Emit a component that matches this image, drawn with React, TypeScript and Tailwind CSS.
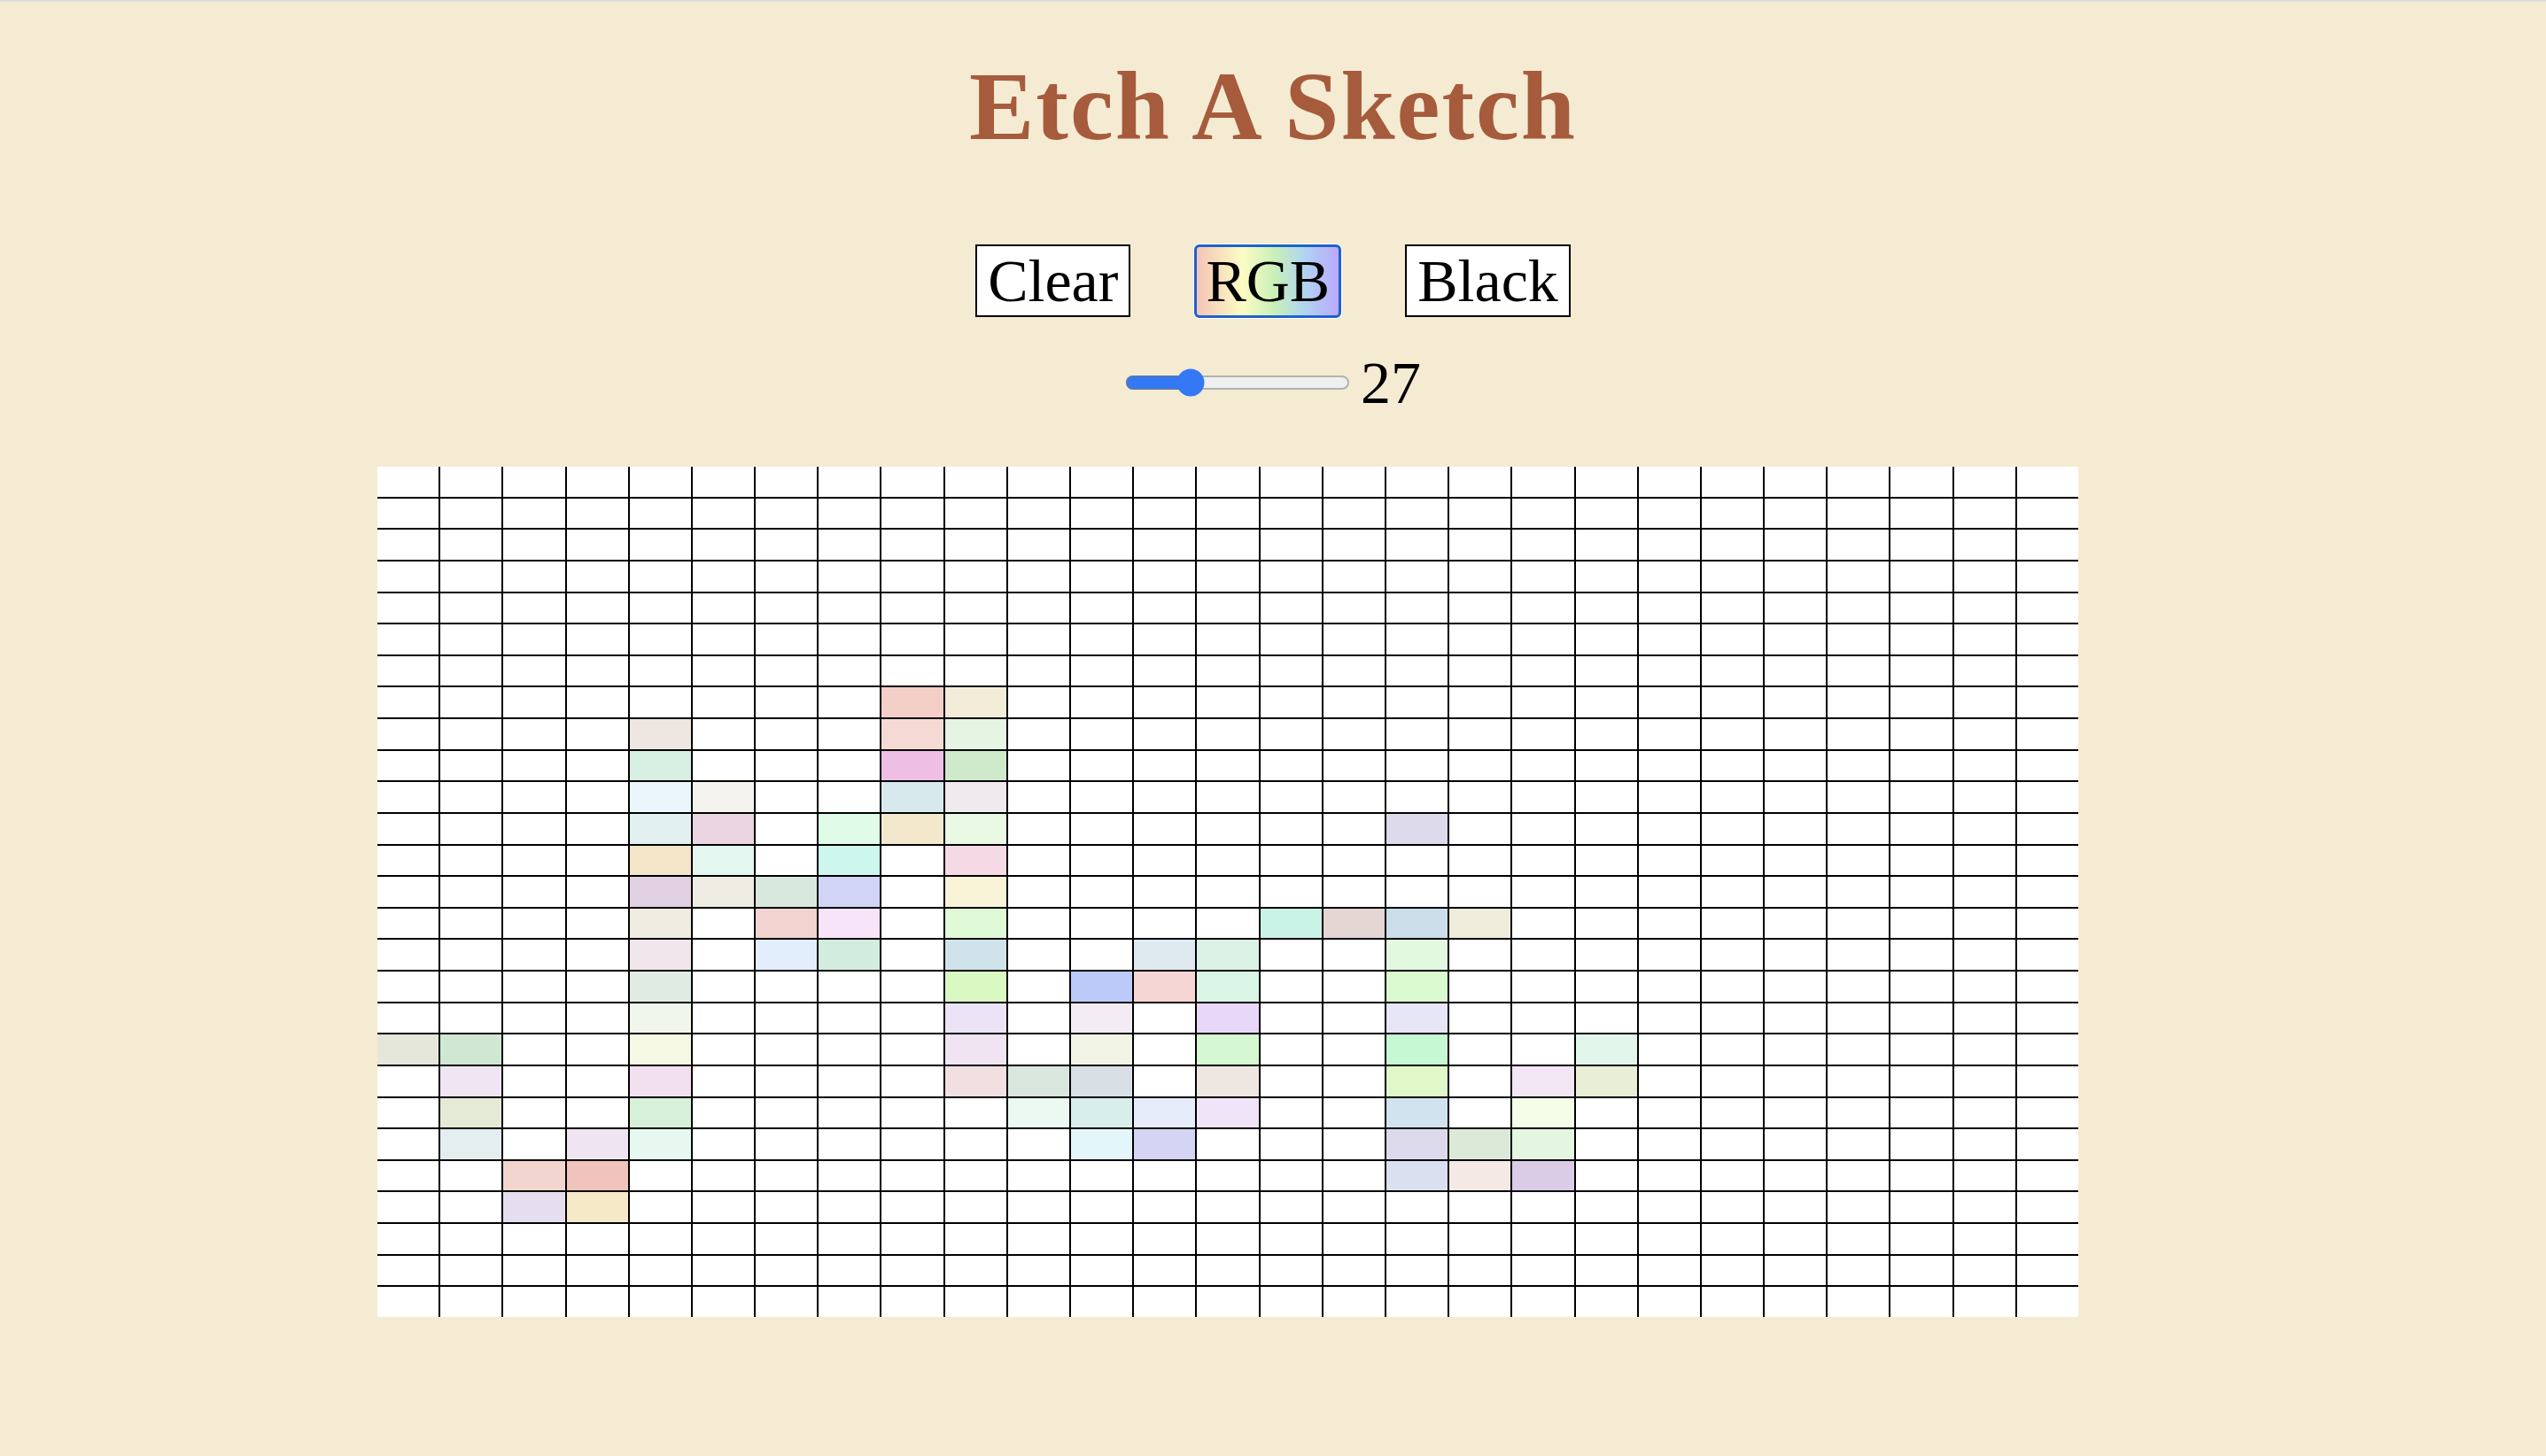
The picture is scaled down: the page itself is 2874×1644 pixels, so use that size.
import { useState } from "react";

const SIZE = 27;

// cells that were painted in rgb mode, keyed "row,col"
const painted: Record<string, string> = {
  "7,8": "#f3cfc8", "7,9": "#f3ecd8",
  "8,4": "#ede6e1", "8,8": "#f5d9d5", "8,9": "#e5f4e3",
  "9,4": "#d7eee2", "9,8": "#eebee4", "9,9": "#ceeacb",
  "10,4": "#eaf6fb", "10,5": "#f4f3ee", "10,8": "#d7e9ed", "10,9": "#f0e9ed",
  "11,4": "#e3f0f0", "11,5": "#ead5e1", "11,7": "#e0fce8", "11,8": "#f3e8cc", "11,9": "#e9f9e4", "11,16": "#dcdaeb",
  "12,4": "#f4e4c8", "12,5": "#e4f6f0", "12,7": "#cdf7ec", "12,9": "#f5dae6",
  "13,4": "#e0d0e2", "13,5": "#eeebe3", "13,6": "#d8e8dc", "13,7": "#d2d4f6", "13,9": "#f9f4d8",
  "14,4": "#efede2", "14,6": "#f2d3d0", "14,7": "#f8e4f9", "14,9": "#e0f9d6",
  "14,14": "#c9f3e6", "14,15": "#e4d6d3", "14,16": "#ccdeea", "14,17": "#efecdb",
  "15,4": "#f0e6eb", "15,6": "#e2eefb", "15,7": "#d2ecde", "15,9": "#d0e3ea",
  "15,12": "#dfeaf0", "15,13": "#dcf2e6", "15,16": "#e2f9e0",
  "16,4": "#e0ece3", "16,9": "#daf9c2", "16,11": "#bbcaf8", "16,12": "#f5d6d5", "16,13": "#d9f5e6", "16,16": "#daf9cf",
  "17,4": "#f0f6ec", "17,9": "#ebe4f6", "17,11": "#f3ecf3", "17,13": "#e8d7f8", "17,16": "#e6e6f6",
  "18,0": "#e4e7da", "18,1": "#d0e8d3", "18,4": "#f5f8e2", "18,9": "#f0e4f2", "18,11": "#f2f4e6",
  "18,13": "#d5f8d2", "18,16": "#c6f8d4", "18,19": "#e2f6ec",
  "19,1": "#f0e6f3", "19,4": "#f2e0f0", "19,9": "#f2dfe0", "19,10": "#d8e6de", "19,11": "#d8e0e6",
  "19,13": "#ede6e1", "19,16": "#e0f8c8", "19,18": "#f2e6f4", "19,19": "#e9efd6",
  "20,1": "#e4ead6", "20,4": "#d6f0d9", "20,10": "#ecf8f2", "20,11": "#d8eeea", "20,12": "#e6ecf9",
  "20,13": "#f0e4f8", "20,16": "#d0e3ee", "20,18": "#f4fde8",
  "21,1": "#e4edf0", "21,3": "#efe4f2", "21,4": "#e6f8f0", "21,11": "#e3f6f9", "21,12": "#d4d4f4",
  "21,16": "#dcdaea", "21,17": "#dce9d9", "21,18": "#e4f6df",
  "22,2": "#f3d5cf", "22,3": "#f0c3bd", "22,16": "#dae0f0", "22,17": "#f4e9e5", "22,18": "#dacce6",
  "23,2": "#e6deef", "23,3": "#f5e9c8",
};

function ModeButton({ label, active }: { label: string; active?: boolean }) {
  const className = active
    ? "h-[83px] px-[10px] leading-[77px] rounded-[6px] border-[3px] border-[#1e62cc] ring-1 ring-white bg-[linear-gradient(90deg,#f4c4b6_0%,#fcfcc4_32%,#c8f0b8_55%,#b0d4f0_76%,#bca8fc_100%)]"
    : "h-[82px] px-[12px] leading-[78px] border-2 border-black bg-white";
  return <button className={`${className} text-[68px] text-black font-['Liberation_Serif',serif]`}>{label}</button>;
}

export default function App() {
  const [size, setSize] = useState(SIZE);
  const cells = [];
  for (let r = 0; r < SIZE; r++) {
    for (let c = 0; c < SIZE; c++) {
      const color = painted[`${r},${c}`] ?? "#ffffff";
      cells.push(<div key={`${r}-${c}`} style={{ backgroundColor: color }} />);
    }
  }

  return (
    <div className="min-h-screen bg-[#f5ebd2] border-t-2 border-[#dcdcdc] font-['Liberation_Serif',serif]">
      <h1 className="pt-[65px] text-center text-[110px] leading-[106px] font-bold tracking-[2px] text-[#a65b3d]">
        Etch A Sketch
      </h1>
      <div className="mt-[103px] flex justify-center items-start gap-[72px]">
        <ModeButton label="Clear" />
        <ModeButton label="RGB" active />
        <ModeButton label="Black" />
      </div>
      <div className="mt-[34px] flex justify-center items-center gap-[12px] h-[78px]">
        <input
          type="range"
          min={1}
          max={100}
          value={size}
          onChange={(e) => setSize(Number(e.target.value))}
          className="w-[127px] [zoom:2] accent-[#3478f6]"
        />
        <span className="text-[68px] leading-[78px] text-black">{size}</span>
      </div>
      <div className="mt-[56px] ml-[426px] w-[1920px] h-[960px] grid grid-cols-[repeat(27,minmax(0,1fr))] grid-rows-[repeat(27,minmax(0,1fr))] gap-[2px] bg-black">
        {cells}
      </div>
    </div>
  );
}
